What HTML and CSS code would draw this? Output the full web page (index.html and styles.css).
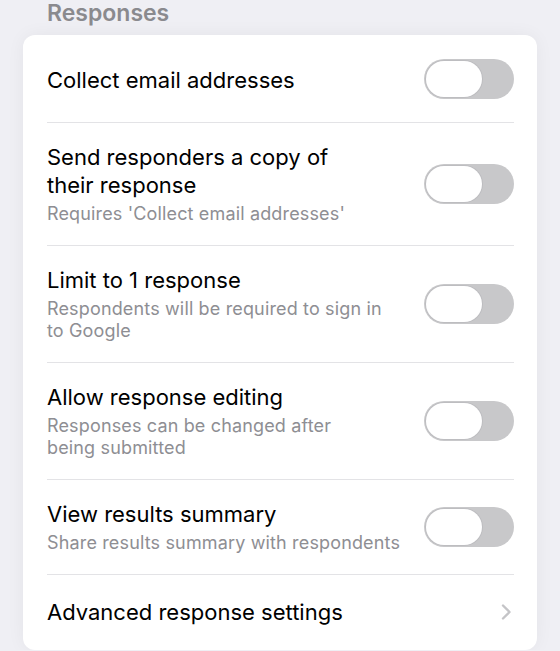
FILE: index.html
```html
<!DOCTYPE html>
<html>
<head>
    <meta charset="UTF-8">
    <title>Responses</title>
    <link rel="stylesheet" href="styles.css">
</head>
<body>
<div class="section-title">Responses</div>

<div class="settings-card">
    <div class="setting-row first">
        <div class="setting-text">
            <div class="setting-label">Collect email addresses</div>
        </div>
        <div class="switch"><div class="knob"></div></div>
    </div>

    <div class="setting-row">
        <div class="setting-text">
            <div class="setting-label">Send responders a copy of<br>their response</div>
            <div class="setting-hint">Requires 'Collect email addresses'</div>
        </div>
        <div class="switch"><div class="knob"></div></div>
    </div>

    <div class="setting-row">
        <div class="setting-text">
            <div class="setting-label">Limit to 1 response</div>
            <div class="setting-hint">Respondents will be required to sign in<br>to Google</div>
        </div>
        <div class="switch"><div class="knob"></div></div>
    </div>

    <div class="setting-row">
        <div class="setting-text">
            <div class="setting-label">Allow response editing</div>
            <div class="setting-hint">Responses can be changed after<br>being submitted</div>
        </div>
        <div class="switch"><div class="knob"></div></div>
    </div>

    <div class="setting-row">
        <div class="setting-text">
            <div class="setting-label">View results summary</div>
            <div class="setting-hint">Share results summary with respondents</div>
        </div>
        <div class="switch"><div class="knob"></div></div>
    </div>

    <div class="setting-row last">
        <div class="setting-text">
            <div class="setting-label">Advanced response settings</div>
        </div>
        <svg class="chevron" width="12" height="18" viewBox="0 0 12 18">
            <path d="M3 2.5 L9.5 9 L3 15.5" fill="none" stroke="#c4c4c7" stroke-width="2.4" stroke-linecap="round" stroke-linejoin="round"/>
        </svg>
    </div>
</div>
</body>
</html>
```

FILE: styles.css
```css
body {
    margin: 0;
    background-color: #efeff4;
    font-family: Inter, "Noto Sans", sans-serif;
    overflow: hidden;
}
.section-title {
    margin-top: -8px;
    padding-left: 47px;
    height: 43px;
    font-size: 23px;
    font-weight: 600;
    line-height: 43px;
    color: #8a8a8e;
}
.settings-card {
    margin-left: 23px;
    width: 514px;
    background-color: white;
    border-radius: 12px;
    box-shadow: 0 0 18px rgba(0,0,0,0.05);
    padding: 0 23px 0 24px;
    box-sizing: border-box;
}
.setting-row {
    display: flex;
    align-items: center;
    justify-content: space-between;
    padding: 20px 0;
    border-bottom: 1px solid #e3e3e6;
}
.setting-row.first {
    padding: 24px 0 23px;
}
.setting-row.first .setting-label {
    padding-top: 2px;
}
.setting-row.last {
    border-bottom: none;
    padding: 23px 0 24px;
}
.setting-label {
    font-size: 22px;
    line-height: 28px;
    color: #000;
}
.setting-hint {
    margin-top: 4px;
    font-size: 18px;
    line-height: 22px;
    letter-spacing: 0.15px;
    color: #8e8e93;
}
.switch {
    width: 90px;
    height: 40px;
    border-radius: 20px;
    background-color: #c8c8ca;
    flex-shrink: 0;
    padding: 2px;
    box-sizing: border-box;
}
.knob {
    width: 56px;
    height: 36px;
    border-radius: 18px;
    background-color: white;
    box-shadow: 0 0 0 1px #bdbdc0;
    box-sizing: border-box;
}
.chevron {
    margin-right: 2px;
}
```
